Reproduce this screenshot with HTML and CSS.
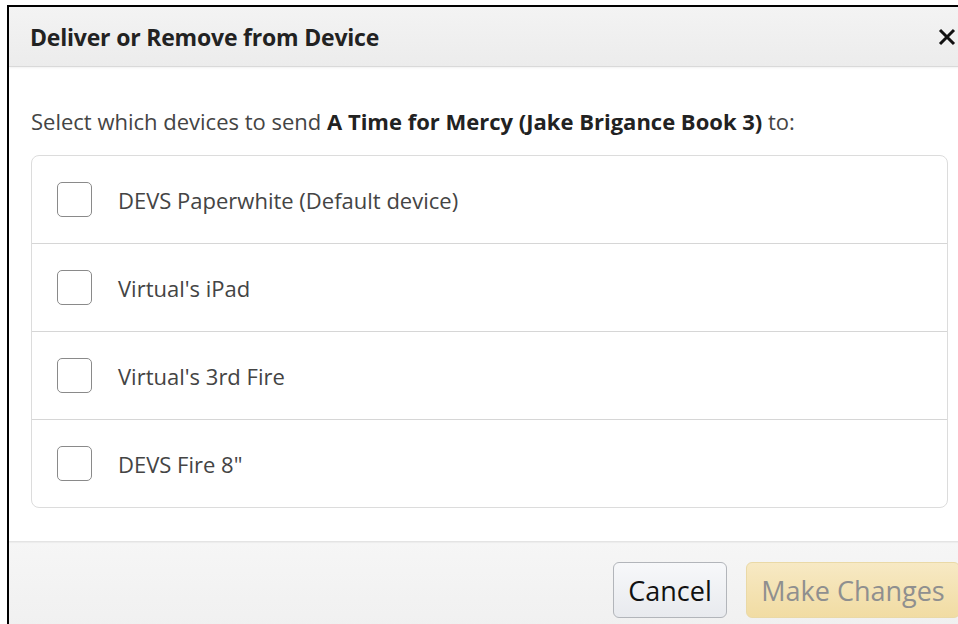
FILE: index.html
```html
<!DOCTYPE html>
<html lang="en">
<head>
<meta charset="utf-8">
<title>Deliver or Remove from Device</title>
<link rel="stylesheet" href="styles.css">
</head>
<body>
<div class="modal">
  <header class="modal-header">
    <h1 class="modal-title">Deliver or Remove from Device</h1>
    <button class="close" aria-label="Close">
      <svg viewBox="0 0 18 18" width="18" height="18"><path d="M2 2 L16 16 M16 2 L2 16" stroke="#111" stroke-width="3" stroke-linecap="butt"/></svg>
    </button>
  </header>
  <main class="modal-body">
    <p class="prompt">Select which devices to send <b>A Time for Mercy (Jake Brigance Book 3)</b> to:</p>
    <ul class="devices">
      <li class="device"><span class="check"></span><span class="name">DEVS Paperwhite (Default device)</span></li>
      <li class="device"><span class="check"></span><span class="name">Virtual's iPad</span></li>
      <li class="device"><span class="check"></span><span class="name">Virtual's 3rd Fire</span></li>
      <li class="device"><span class="check"></span><span class="name">DEVS Fire 8"</span></li>
    </ul>
  </main>
  <footer class="modal-footer">
    <button class="btn btn-cancel">Cancel</button>
    <button class="btn btn-primary" disabled>Make Changes</button>
  </footer>
</div>
</body>
</html>
```
FILE: styles.css
```css
html, body {
  margin: 0;
  height: 624px;
  overflow: hidden;
  background: #fff;
}
body {
  padding: 5px 0 0 7px;
  box-sizing: border-box;
  font-family: "Open Sans", "Noto Sans", sans-serif;
}
.modal {
  width: 951px;
  border-top: 2px solid #000;
  border-left: 2px solid #000;
  background: #fff;
}
.modal-header {
  height: 59px;
  display: flex;
  align-items: center;
  justify-content: space-between;
  padding: 0 4px 0 21px;
  background: linear-gradient(#f3f3f3, #ececec);
  border-bottom: 1px solid #d9d9d9;
  box-shadow: 0 1px 2px rgba(0,0,0,0.06);
}
.modal-title {
  margin: 0;
  font-size: 23px;
  font-weight: 700;
  letter-spacing: -0.2px;
  color: #222;
}
.close {
  border: 0;
  background: none;
  padding: 0;
  width: 18px;
  height: 18px;
  display: flex;
}
.modal-body {
  padding: 39px 12px 33px 22px;
}
.prompt {
  margin: 0 0 19px;
  font-size: 22px;
  line-height: 30px;
  color: #444;
}
.prompt b {
  color: #222;
}
.devices {
  list-style: none;
  margin: 0;
  padding: 0;
  border: 1px solid #dcdcdc;
  border-radius: 8px;
}
.device {
  height: 88px;
  display: flex;
  align-items: center;
  padding-left: 25px;
  gap: 26px;
  border-top: 1px solid #d6d6d6;
  box-sizing: border-box;
}
.device:first-child {
  border-top: 0;
  height: 87px;
}
.check {
  width: 35px;
  height: 35px;
  box-sizing: border-box;
  border: 1.5px solid #8a8a8a;
  border-radius: 5px;
  background: #fff;
}
.name {
  font-size: 22px;
  color: #444;
}
.modal-footer {
  height: 81px;
  display: flex;
  justify-content: flex-end;
  align-items: flex-start;
  gap: 19px;
  padding: 20px 0 0;
  background: linear-gradient(#f6f6f6, #efefef);
  border-top: 1px solid #e4e4e4;
  box-shadow: inset 0 1px 1px rgba(0,0,0,0.04);
}
.btn {
  height: 56px;
  border-radius: 6px;
  font-family: inherit;
  font-size: 27px;
  padding: 0 10px;
  white-space: nowrap;
  flex: none;
}
.btn-cancel {
  width: 114px;
  border: 1px solid #b2b5ba;
  background: linear-gradient(#f7f8fa, #e8eaee);
  color: #111;
}
.btn-primary {
  width: 214px;
  border: 1px solid #ead9a6;
  background: linear-gradient(#f7e9c4, #f1dca3);
  color: #8f8f8f;
}
```
